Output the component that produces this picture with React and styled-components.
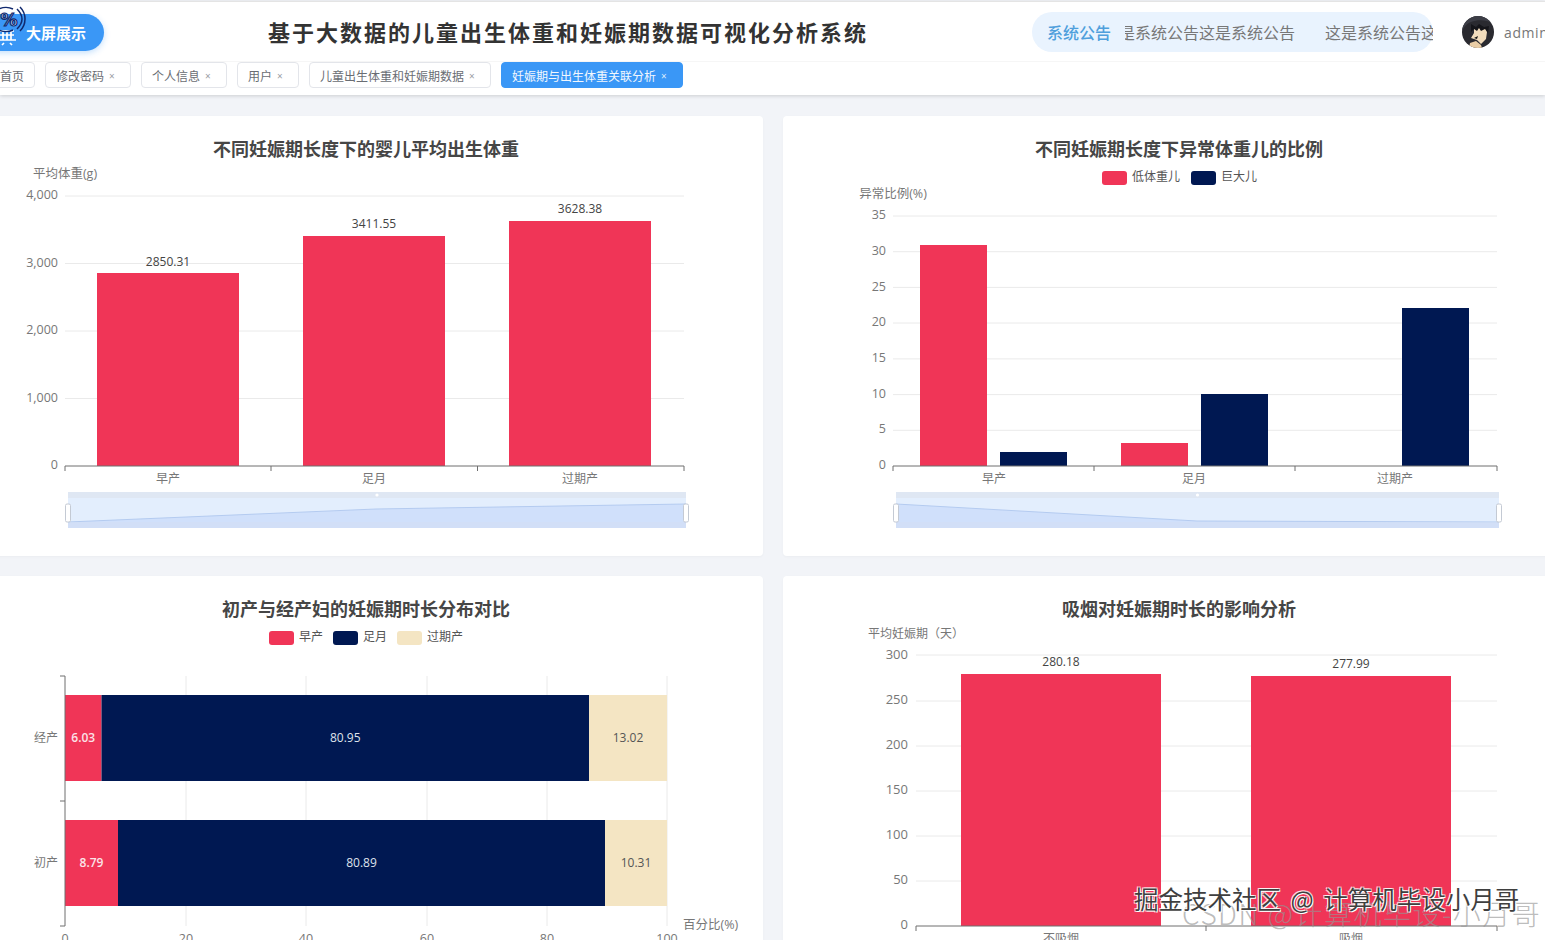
import React from "react";
import styled, { createGlobalStyle } from "styled-components";

const Global = createGlobalStyle`
  html, body { margin: 0; padding: 0; height: 940px; overflow: hidden; background: #f2f4f8; }
  body { font-family: "Open Sans", "Noto Sans CJK SC", sans-serif; }
  #root { height: 940px; overflow: hidden; }
`;

const RED = "#f03557";
const NAVY = "#001852";
const BEIGE = "#f4e5c3";

const Page = styled.div`
  position: relative;
  width: 1545px;
  height: 940px;
  overflow: hidden;
  background: #f2f4f8;
`;
const Header = styled.header`
  background: #fff;
  border-top: 1px solid #e4e4e4;
  margin-top: 1px;
  box-shadow: 0 1px 4px rgba(0, 0, 0, 0.16);
  height: 93px;
  overflow: hidden;
`;
const TopBar = styled.div`
  display: flex;
  align-items: center;
  height: 59px;
  border-bottom: 1px solid #f6f6f6;
  white-space: nowrap;
`;
const ScreenButton = styled.div`
  position: relative;
  flex: none;
  display: flex;
  align-items: center;
  margin: 2px 0 0 -20px;
  padding-left: 46px;
  box-sizing: border-box;
  width: 124px;
  height: 37px;
  border-radius: 19px;
  background: #3a97f6;
  color: #fff;
  font-size: 15px;
  font-weight: 700;
  box-shadow: 0 2px 6px rgba(58, 151, 246, 0.3);
`;
const ButtonIcon = styled.svg`
  position: absolute;
  left: 20px;
  top: -8px;
  width: 26px;
  height: 42px;
  overflow: visible;
`;
const IconPercent = styled.text`
  font-family: "DejaVu Sans", sans-serif;
  font-size: 17px;
  font-weight: 700;
  fill: #d9e6fb;
  stroke: #10296e;
  stroke-width: 1.2px;
  text-anchor: middle;
`;
const PageTitle = styled.h1`
  flex: none;
  margin: 1px 0 0 164px;
  width: 598px;
  font-size: 22px;
  line-height: 30px;
  font-weight: 700;
  letter-spacing: 2px;
  color: #333;
`;
const Notice = styled.div`
  flex: none;
  display: flex;
  align-items: center;
  margin-left: 166px;
  width: 401px;
  height: 40px;
  padding-left: 15px;
  box-sizing: border-box;
  border-radius: 20px;
  background: #e9f3fe;
  font-size: 16px;
`;
const NoticeLabel = styled.span`
  flex: none;
  width: 78px;
  color: #4f9fdc;
  font-weight: 500;
`;
const NoticeWindow = styled.div`
  flex: 1;
  min-width: 0;
  overflow: hidden;
`;
const NoticeTrack = styled.div`
  display: flex;
  gap: 30px;
  margin-left: -22px;
  color: #777;
`;
const Avatar = styled.svg`
  flex: none;
  margin-left: 29px;
  width: 32px;
  height: 32px;
`;
const UserName = styled.span`
  flex: none;
  margin: 1px 0 0 10px;
  font-size: 14px;
  letter-spacing: 0.6px;
  color: #777;
`;
const TabBar = styled.nav`
  display: flex;
  gap: 10px;
  margin-left: -11px;
`;
const Tab = styled.div`
  flex: none;
  display: flex;
  align-items: center;
  height: 26px;
  padding: 1px 10px 0;
  box-sizing: border-box;
  border: 1px solid ${(p) => (p.$active ? "#3a97f6" : "#e3e5ea")};
  border-radius: 4px;
  background: ${(p) => (p.$active ? "#3a97f6" : "#fff")};
  color: ${(p) => (p.$active ? "#f2f7fe" : "#6a6d73")};
  font-size: 12px;
  white-space: nowrap;
`;
const TabClose = styled.span`
  flex: none;
  width: 16px;
  padding-left: 5px;
  box-sizing: border-box;
  font-size: 10px;
  line-height: 1;
  color: ${(p) => (p.$active ? "#dcecfd" : "#9a9da3")};
`;
const Dashboard = styled.main`
  display: grid;
  grid-template-columns: 794px 792px;
  grid-auto-rows: 440px;
  gap: 20px;
  margin: 21px 0 0 -31px;
  width: 1606px;
`;
const Card = styled.section`
  display: flex;
  flex-direction: column;
  background: #fff;
  border-radius: 4px;
  box-shadow: 0 1px 3px rgba(0, 0, 0, 0.03);
  overflow: hidden;
`;
const CardTitle = styled.h2`
  flex: none;
  margin: 0;
  padding-top: 20px;
  height: 26px;
  font-size: 18px;
  line-height: 26px;
  font-weight: 700;
  text-align: center;
  color: #464646;
`;
const Chart = styled.svg`
  display: block;
  flex: none;
  width: 100%;
  height: 394px;
  font-family: "Open Sans", "Noto Sans CJK SC", sans-serif;
`;
const AxisText = styled.text`
  font-size: ${(p) => p.$size || 12}px;
  fill: ${(p) => p.$color || "#777"};
  text-anchor: ${(p) => p.$anchor || "middle"};
  dominant-baseline: central;
`;
const ValueText = styled.text`
  font-size: 12px;
  font-weight: ${(p) => p.$weight || 400};
  fill: ${(p) => p.$color || "#444"};
  text-anchor: middle;
  dominant-baseline: central;
`;
const Watermark = styled.div`
  position: absolute;
  left: 1134px;
  top: 883px;
  font-family: "Noto Sans CJK SC", sans-serif;
  font-size: 24.5px;
  word-spacing: 4px;
  line-height: 32px;
  white-space: nowrap;
  color: #3f3f3f;
  text-shadow: 1px 1px 0 #fff, -1px -1px 0 rgba(255, 255, 255, 0.8), 1px -1px 0 rgba(255, 255, 255, 0.7), -1px 1px 0 rgba(255, 255, 255, 0.7);
`;
const WatermarkFaint = styled.div`
  position: absolute;
  left: 1182px;
  top: 895px;
  font-family: "Noto Sans CJK SC", sans-serif;
  font-size: 28px;
  font-weight: 300;
  letter-spacing: 1.5px;
  line-height: 36px;
  white-space: nowrap;
  color: rgba(150, 150, 150, 0.65);
`;

const Grid = ({ x1, x2, ys }) =>
  ys.map((y) => <line key={y} x1={x1} x2={x2} y1={y} y2={y} stroke="#eaeaea" strokeWidth="1" />);

const XAxis = ({ y, ticks }) => (
  <g stroke="#6e6e6e" strokeWidth="1" fill="none">
    <line x1={ticks[0]} x2={ticks[ticks.length - 1]} y1={y} y2={y} />
    {ticks.map((t) => (
      <line key={t} x1={t} x2={t} y1={y} y2={y + 5} />
    ))}
  </g>
);

const Bar = ({ x, w, top, bottom, color }) => (
  <rect x={x} y={top} width={w} height={bottom - top} fill={color} />
);

const Legend = ({ items, y }) =>
  items.map((it) => (
    <g key={it.label}>
      <rect x={it.x} y={y - 7} width="25" height="14" rx="3" fill={it.color} />
      <AxisText x={it.x + 30} y={y - 1.5} $anchor="start" $color="#555">
        {it.label}
      </AxisText>
    </g>
  ));

const DataZoom = ({ x1, x2, points }) => {
  const top = 492;
  const bottom = 528;
  const line = points.map((p) => p.join(",")).join(" ");
  const area = `${x1},${bottom} ${line} ${x2},${bottom}`;
  return (
    <g>
      <rect x={x1} y={top} width={x2 - x1} height="6" fill="#dfe7f3" />
      <rect x={x1} y={top + 6} width={x2 - x1} height={bottom - top - 6} fill="#e3eefd" />
      <polygon points={area} fill="#d0e0fb" />
      <polyline points={line} fill="none" stroke="#b4cbf0" strokeWidth="1" />
      <rect x={x1} y={bottom - 6} width={x2 - x1} height="6" fill="#d2dff4" opacity="0.65" />
      <circle cx={(x1 + x2) / 2} cy={top + 3} r="1.6" fill="#fff" />
      {[x1, x2].map((hx) => (
        <rect key={hx} x={hx - 2.5} y="504" width="5" height="18" rx="1.5" fill="#fff" stroke="#c4cad4" strokeWidth="1" />
      ))}
    </g>
  );
};

const ChartWeight = () => (
  <Chart viewBox="-31 162 794 394">
    <AxisText x="65" y="173" $size="12.5">平均体重(g)</AxisText>
    <Grid x1={65} x2={684} ys={[196, 263.5, 331, 398.5]} />
    {[["4,000", 194], ["3,000", 262], ["2,000", 329], ["1,000", 397], ["0", 464]].map(([t, y]) => (
      <AxisText key={t} x="58" y={y} $anchor="end" $size="12.5">{t}</AxisText>
    ))}
    <Bar x={97} w={142} top={273} bottom={466} color={RED} />
    <Bar x={303} w={142} top={236} bottom={466} color={RED} />
    <Bar x={509} w={142} top={221} bottom={466} color={RED} />
    <ValueText x="168" y="261">2850.31</ValueText>
    <ValueText x="374" y="223">3411.55</ValueText>
    <ValueText x="580" y="208">3628.38</ValueText>
    <XAxis y={466} ticks={[65, 271, 477.5, 684]} />
    <AxisText x="168" y="478">早产</AxisText>
    <AxisText x="374" y="478">足月</AxisText>
    <AxisText x="580" y="478">过期产</AxisText>
    <DataZoom x1={68} x2={686} points={[[68, 522], [376, 509], [686, 504]]} />
  </Chart>
);

const ChartAbnormal = () => (
  <Chart viewBox="783 162 792 394">
    <Legend y={178} items={[{ x: 1102, label: "低体重儿", color: RED }, { x: 1191, label: "巨大儿", color: NAVY }]} />
    <AxisText x="893" y="193" $size="12.5">异常比例(%)</AxisText>
    <Grid x1={893} x2={1497} ys={[216, 251.7, 287.4, 323, 358.9, 394.6, 430.3]} />
    {[["35", 214], ["30", 250], ["25", 286], ["20", 321], ["15", 357], ["10", 393], ["5", 428], ["0", 464]].map(([t, y]) => (
      <AxisText key={t} x="886" y={y} $anchor="end" $size="12.5">{t}</AxisText>
    ))}
    <Bar x={920} w={67} top={245} bottom={466} color={RED} />
    <Bar x={1000} w={67} top={452} bottom={466} color={NAVY} />
    <Bar x={1121} w={67} top={443} bottom={466} color={RED} />
    <Bar x={1201} w={67} top={394} bottom={466} color={NAVY} />
    <Bar x={1402} w={67} top={308} bottom={466} color={NAVY} />
    <XAxis y={466} ticks={[893, 1094, 1295, 1497]} />
    <AxisText x="994" y="478">早产</AxisText>
    <AxisText x="1194" y="478">足月</AxisText>
    <AxisText x="1395" y="478">过期产</AxisText>
    <DataZoom x1={896} x2={1499} points={[[896, 504], [1197, 521], [1499, 522]]} />
  </Chart>
);

const rows = [
  { name: "经产", top: 695, a: 101.5, b: 589, va: "6.03", vb: "80.95", vc: "13.02" },
  { name: "初产", top: 820, a: 118, b: 605, va: "8.79", vb: "80.89", vc: "10.31" },
];
const pctTicks = [["0", 65], ["20", 186], ["40", 306], ["60", 427], ["80", 547], ["100", 667]];

const ChartParity = () => (
  <Chart viewBox="-31 622 794 394">
    <Legend
      y={638}
      items={[
        { x: 269, label: "早产", color: RED },
        { x: 333, label: "足月", color: NAVY },
        { x: 397, label: "过期产", color: BEIGE },
      ]}
    />
    {pctTicks.slice(1).map(([t, x]) => (
      <line key={t} x1={x} x2={x} y1={676} y2={926} stroke="#eaeaea" />
    ))}
    {rows.map((r) => (
      <g key={r.name}>
        <Bar x={65} w={r.a - 65} top={r.top} bottom={r.top + 86} color={RED} />
        <Bar x={r.a} w={r.b - r.a} top={r.top} bottom={r.top + 86} color={NAVY} />
        <Bar x={r.b} w={667 - r.b} top={r.top} bottom={r.top + 86} color={BEIGE} />
        <ValueText x={(65 + r.a) / 2} y={r.top + 42} $color="#fbe3e8" $weight={600}>{r.va}</ValueText>
        <ValueText x={(r.a + r.b) / 2} y={r.top + 42} $color="#dfe3ec">{r.vb}</ValueText>
        <ValueText x={(r.b + 667) / 2} y={r.top + 42} $color="#555">{r.vc}</ValueText>
        <AxisText x="58" y={r.top + 42} $anchor="end">{r.name}</AxisText>
      </g>
    ))}
    <g stroke="#6e6e6e" strokeWidth="1" fill="none">
      <line x1="65" x2="65" y1="676" y2="926" />
      {[676, 801, 926].map((y) => (
        <line key={y} x1="60" x2="65" y1={y} y2={y} />
      ))}
    </g>
    {pctTicks.map(([t, x]) => (
      <AxisText key={t} x={x} y="938" $size="12.5">{t}</AxisText>
    ))}
    <AxisText x="683" y="924" $anchor="start" $size="12.5">百分比(%)</AxisText>
  </Chart>
);

const ChartSmoking = () => (
  <Chart viewBox="783 622 792 394">
    <AxisText x="868" y="633" $anchor="start">平均妊娠期（天）</AxisText>
    <Grid x1={916} x2={1497} ys={[655, 701, 746, 791, 836, 881]} />
    {[["300", 654], ["250", 699], ["200", 744], ["150", 789], ["100", 834], ["50", 879], ["0", 924]].map(([t, y]) => (
      <AxisText key={t} x="908" y={y} $anchor="end" $size="13">{t}</AxisText>
    ))}
    <Bar x={961} w={200} top={674} bottom={926} color={RED} />
    <Bar x={1251} w={200} top={676} bottom={926} color={RED} />
    <ValueText x="1061" y="661">280.18</ValueText>
    <ValueText x="1351" y="663">277.99</ValueText>
    <XAxis y={926} ticks={[916, 1206, 1497]} />
    <AxisText x="1061" y="938">不吸烟</AxisText>
    <AxisText x="1351" y="938">吸烟</AxisText>
  </Chart>
);

const tabs = ["修改密码", "个人信息", "用户", "儿童出生体重和妊娠期数据"];

export default function App() {
  return (
    <Page>
      <Global />
      <Header>
        <TopBar>
          <ScreenButton>
            <ButtonIcon viewBox="0 0 26 42">
              <g fill="none" stroke="#fff" strokeWidth="1.7">
                <path d="M3 25v9M7 25v9M11 25v9M0 25h14M-2 34h18M0 29h14" />
                <path d="M4 37l-2 2M10 37l2 2" />
              </g>
              <g fill="none" stroke="#10296e" strokeWidth="1.5">
                <path d="M17 3c3 3 5 6 5 10s-2 7-5 10" />
                <path d="M20 1c3 3 5 7 5 12s-2 9-5 12" />
                <path d="M-1 24c4 2 10 2 14 0" />
                <path d="M-1 3c4-2 10-2 14 0" />
              </g>
              <IconPercent x="9" y="20">%</IconPercent>
            </ButtonIcon>
            大屏展示
          </ScreenButton>
          <PageTitle>基于大数据的儿童出生体重和妊娠期数据可视化分析系统</PageTitle>
          <Notice>
            <NoticeLabel>系统公告</NoticeLabel>
            <NoticeWindow>
              <NoticeTrack>
                <span>这是系统公告这是系统公告</span>
                <span>这是系统公告这是系统公告</span>
              </NoticeTrack>
            </NoticeWindow>
          </Notice>
          <Avatar viewBox="0 0 32 32">
            <defs>
              <clipPath id="avatarClip">
                <circle cx="16" cy="16" r="16" />
              </clipPath>
            </defs>
            <g clipPath="url(#avatarClip)">
              <rect width="32" height="32" fill="#2a2a30" />
              <path d="M0 0h32v8C26 4 16 3 9 6 4 8 1 12 0 16z" fill="#3c3d46" />
              <path d="M12 11l3 3 2-4 3 4 3-3 2 5-1 7-5 5-4-4-6-2 3-5z" fill="#f2dcbc" />
              <path d="M8 27l6-2 5 4 1 3H7z" fill="#e9cda6" />
              <path d="M9 8l5 3 3-3 5 3 5-1-1 7-3-4-4 2-2-3-2 3-3-2-3 3z" fill="#15151a" />
              <path d="M12 22l4-2-1 3z" fill="#111" />
            </g>
          </Avatar>
          <UserName>admin</UserName>
        </TopBar>
        <TabBar>
          <Tab>首页</Tab>
          {tabs.map((t) => (
            <Tab key={t}>
              {t}
              <TabClose>×</TabClose>
            </Tab>
          ))}
          <Tab $active>
            妊娠期与出生体重关联分析
            <TabClose $active>×</TabClose>
          </Tab>
        </TabBar>
      </Header>
      <Dashboard>
        <Card>
          <CardTitle>不同妊娠期长度下的婴儿平均出生体重</CardTitle>
          <ChartWeight />
        </Card>
        <Card>
          <CardTitle>不同妊娠期长度下异常体重儿的比例</CardTitle>
          <ChartAbnormal />
        </Card>
        <Card>
          <CardTitle>初产与经产妇的妊娠期时长分布对比</CardTitle>
          <ChartParity />
        </Card>
        <Card>
          <CardTitle>吸烟对妊娠期时长的影响分析</CardTitle>
          <ChartSmoking />
        </Card>
      </Dashboard>
      <WatermarkFaint>CSDN @计算机毕设-小月哥</WatermarkFaint>
      <Watermark>掘金技术社区 @ 计算机毕设小月哥</Watermark>
    </Page>
  );
}
